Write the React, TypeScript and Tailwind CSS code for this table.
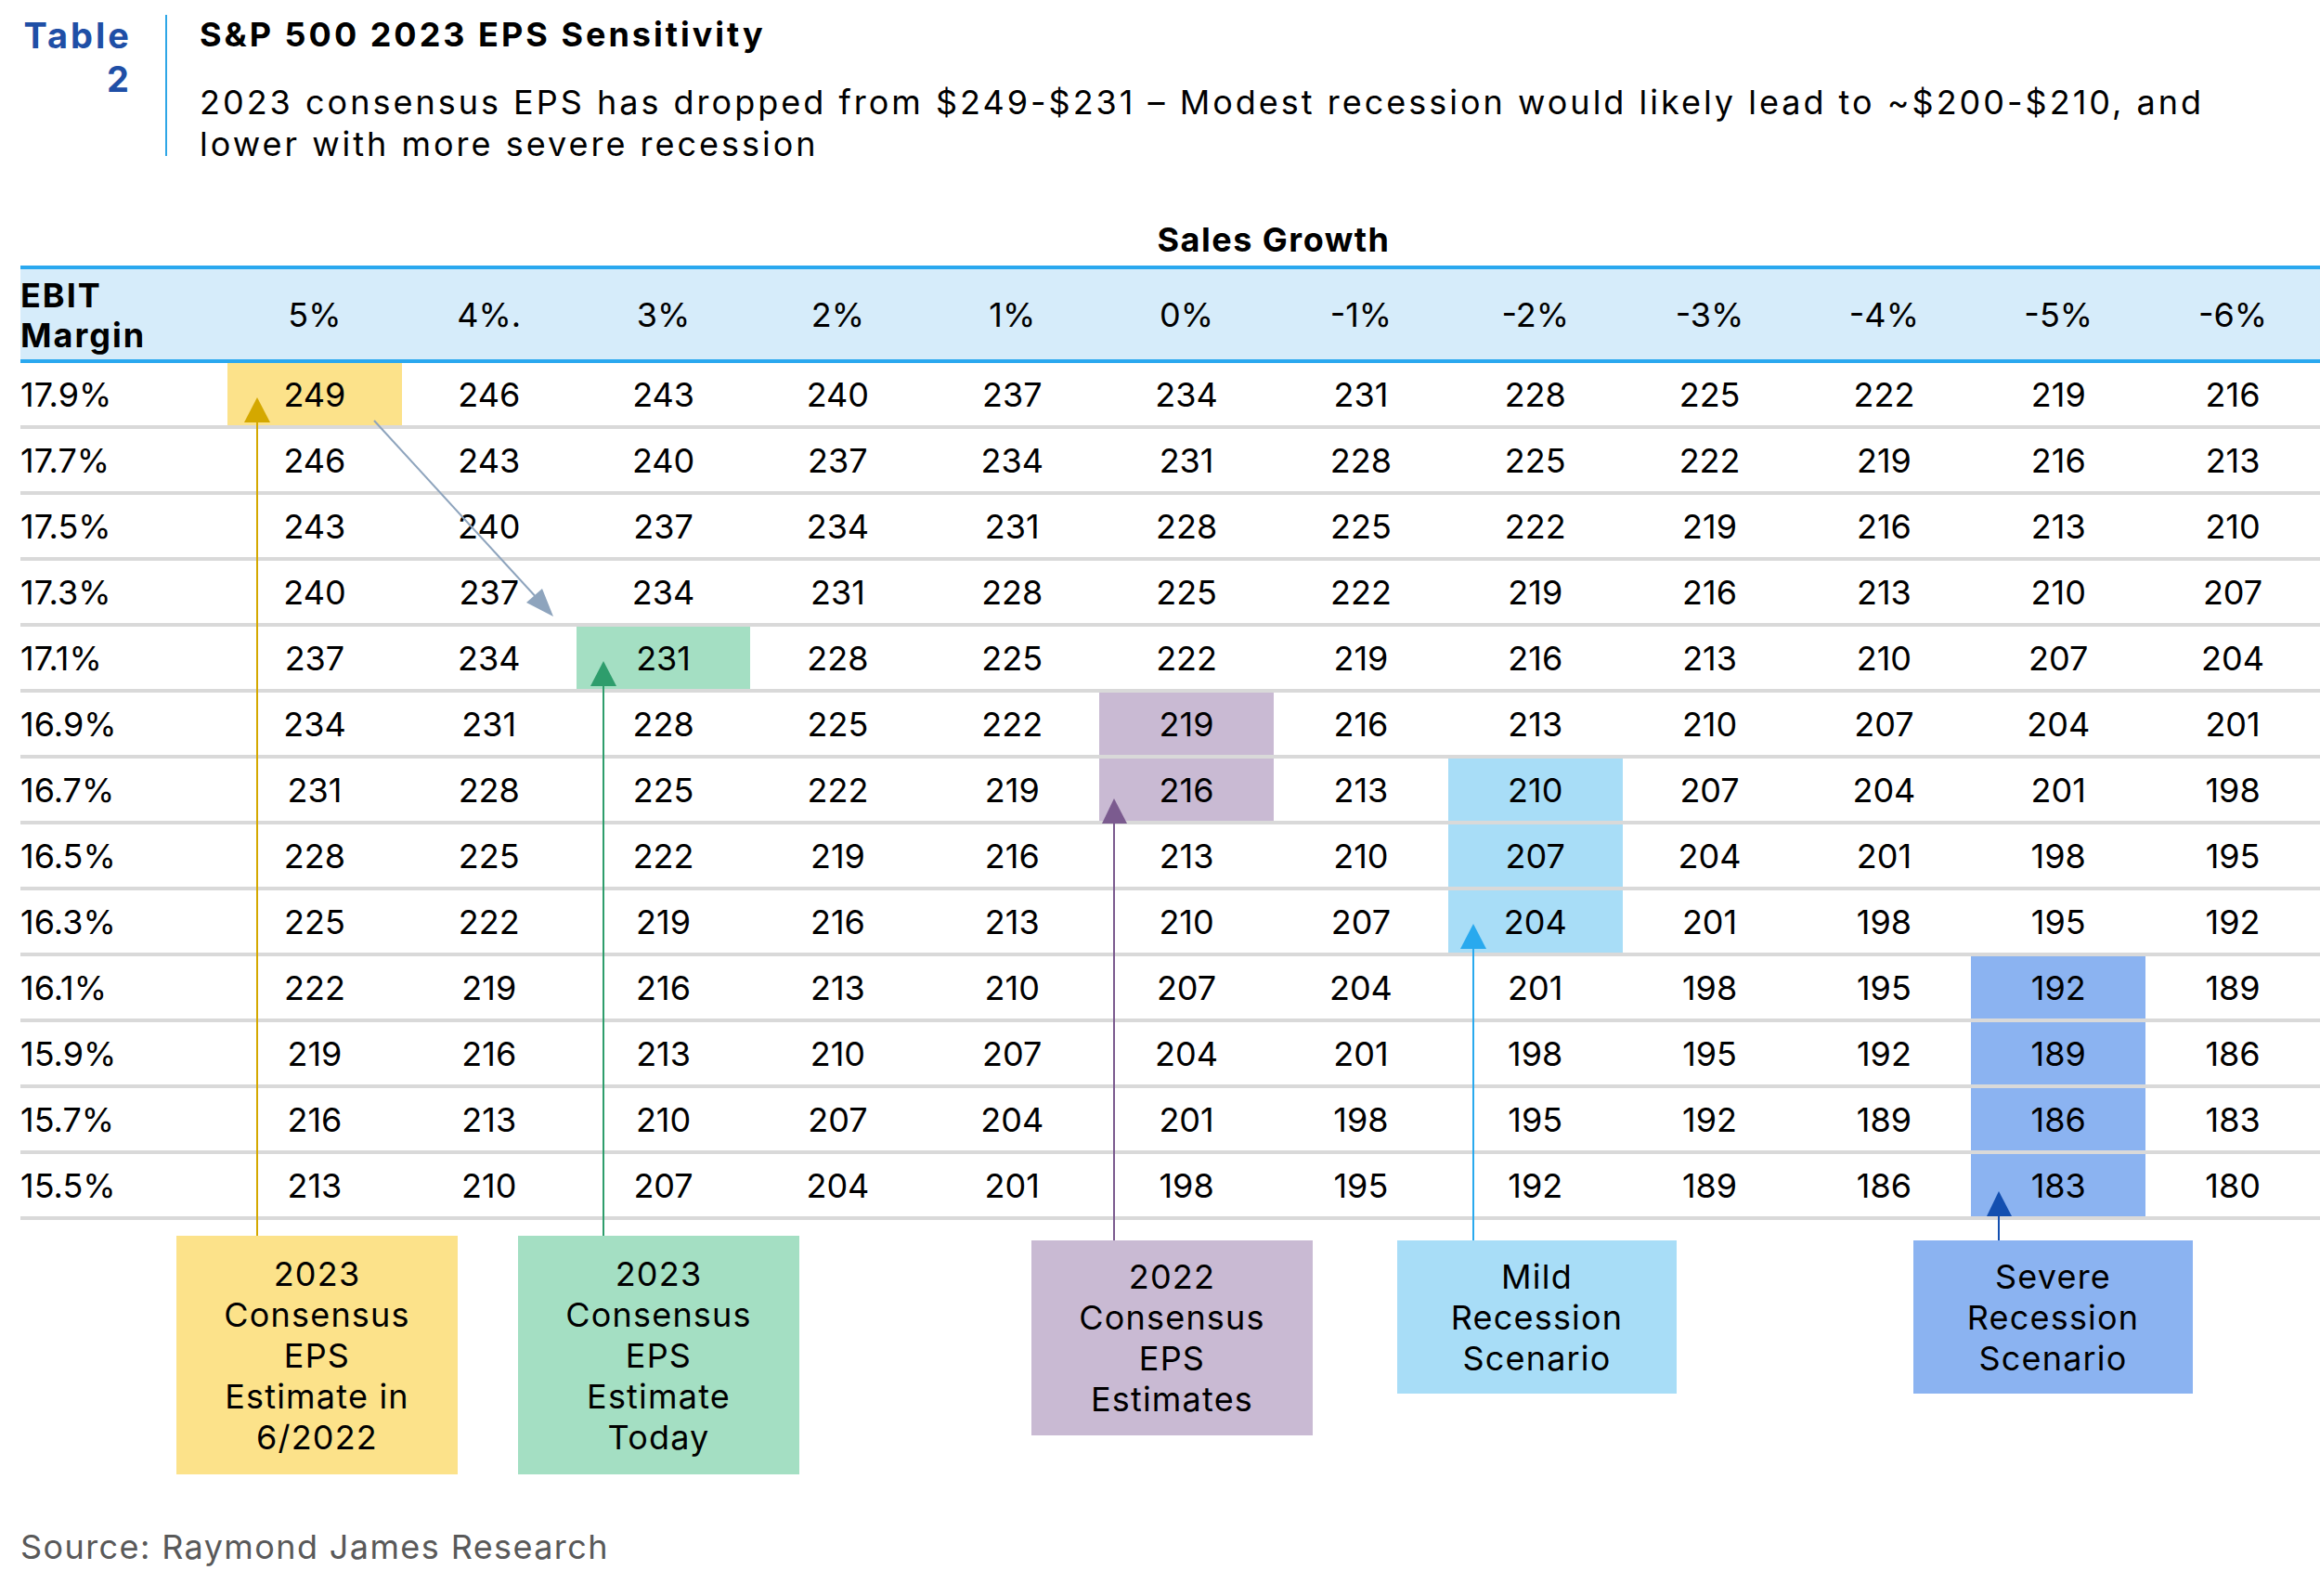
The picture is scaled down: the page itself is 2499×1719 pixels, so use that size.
const margins = ['17.9%', '17.7%', '17.5%', '17.3%', '17.1%', '16.9%', '16.7%', '16.5%', '16.3%', '16.1%', '15.9%', '15.7%', '15.5%'];
const growth = ['5%', '4%.', '3%', '2%', '1%', '0%', '-1%', '-2%', '-3%', '-4%', '-5%', '-6%'];

// highlighted cells: "row-col" -> background class
const highlight: Record<string, string> = {
  '0-0': 'bg-[#fce28a]',
  '4-2': 'bg-[#a4dfc3]',
  '5-5': 'bg-[#c9bad3]',
  '6-5': 'bg-[#c9bad3]',
  '6-7': 'bg-[#a8ddf7]',
  '7-7': 'bg-[#a8ddf7]',
  '8-7': 'bg-[#a8ddf7]',
  '9-10': 'bg-[#8bb3f1]',
  '10-10': 'bg-[#8bb3f1]',
  '11-10': 'bg-[#8bb3f1]',
  '12-10': 'bg-[#8bb3f1]',
};

function Note({ lines, className }: { lines: string[]; className: string }) {
  return (
    <div className={`flex flex-col items-center justify-center text-center text-[36px] leading-[44px] tracking-[1.2px] ${className}`}>
      {lines.map((l) => (
        <span key={l}>{l}</span>
      ))}
    </div>
  );
}

// arrows drawn over the table
function Arrows() {
  return (
    <svg className="absolute left-0 top-0 pointer-events-none" width="2499" height="1719">
      {/* yellow */}
      <line x1="277" y1="452" x2="277" y2="1331" stroke="#d4a800" strokeWidth="2" />
      <polygon points="263,455 291,455 277,428" fill="#d4a800" />
      {/* diagonal grey */}
      <line x1="403" y1="453" x2="580" y2="646" stroke="#8ea4bd" strokeWidth="2" />
      <polygon points="596,664 567,649 584,634" fill="#8ea4bd" />
      {/* green */}
      <line x1="650" y1="736" x2="650" y2="1331" stroke="#2e9d6c" strokeWidth="2" />
      <polygon points="636,739 664,739 650,712" fill="#2e9d6c" />
      {/* purple */}
      <line x1="1200" y1="884" x2="1200" y2="1336" stroke="#7b5b8f" strokeWidth="2" />
      <polygon points="1187,887 1214,887 1200,860" fill="#7b5b8f" />
      {/* light blue */}
      <line x1="1587" y1="1019" x2="1587" y2="1336" stroke="#29a9ee" strokeWidth="2" />
      <polygon points="1573,1022 1601,1022 1587,995" fill="#29a9ee" />
      {/* dark blue */}
      <line x1="2153" y1="1307" x2="2153" y2="1336" stroke="#134fb0" strokeWidth="2" />
      <polygon points="2140,1310 2167,1310 2153,1283" fill="#134fb0" />
    </svg>
  );
}

export default function App() {
  return (
    <div className="relative w-[2499px] h-[1719px] overflow-hidden bg-white text-black font-['Inter',sans-serif]">
      {/* Title block */}
      <div className="h-[236px] flex pt-[15px] pl-[22px]">
        <div className="w-[120px] text-right font-bold text-[#1f4fa6] text-[38px] leading-[47px] tracking-[3px]">
          Table
          <br />2
        </div>
        <div className="ml-[36px] mt-[1px] w-[2px] h-[152px] bg-[#2ea6e6]" />
        <div className="ml-[35px]">
          <div className="font-bold text-[36px] leading-[45px] tracking-[3px]">S&amp;P 500 2023 EPS Sensitivity</div>
          <div className="mt-[28px] text-[36px] leading-[45px] tracking-[3px]">
            2023 consensus EPS has dropped from $249-$231 – Modest recession would likely lead to ~$200-$210, and
            <br />
            lower with more severe recession
          </div>
        </div>
      </div>

      {/* Sales Growth */}
      <div className="h-[45px] pl-[245px] text-center font-bold text-[36px] leading-[45px] tracking-[1.5px]">Sales Growth</div>

      {/* Table */}
      <div className="mt-[5px] ml-[22px] w-[2477px] text-[36px]">
        <div className="grid grid-cols-[223px_repeat(12,minmax(0,1fr))] h-[105px] border-y-4 border-[#2aa8ef] bg-[#d6ecfa]">
          <div className="flex flex-col justify-center font-bold leading-[43px] pt-[2px] tracking-[2px]">
            <span>EBIT</span>
            <span>Margin</span>
          </div>
          {growth.map((g) => (
            <div key={g} className="flex items-center justify-center">
              {g}
            </div>
          ))}
        </div>
        {margins.map((m, r) => (
          <div key={m} className="grid grid-cols-[223px_repeat(12,minmax(0,1fr))] h-[71px] border-b-4 border-[#d9d9d9]">
            <div className="flex items-center">{m}</div>
            {growth.map((g, c) => (
              <div key={g} className={`flex items-center justify-center ${highlight[`${r}-${c}`] ?? ''}`}>
                {249 - 3 * r - 3 * c}
              </div>
            ))}
          </div>
        ))}
      </div>

      {/* Annotation boxes */}
      <div className="mt-[17px] pl-[190px] flex items-start">
        <Note className="w-[303px] h-[257px] bg-[#fce28a]" lines={['2023', 'Consensus', 'EPS', 'Estimate in', '6/2022']} />
        <Note className="ml-[65px] w-[303px] h-[257px] bg-[#a4dfc3]" lines={['2023', 'Consensus', 'EPS', 'Estimate', 'Today']} />
        <Note className="ml-[250px] mt-[5px] w-[303px] h-[210px] bg-[#c9bad3]" lines={['2022', 'Consensus', 'EPS', 'Estimates']} />
        <Note className="ml-[91px] mt-[5px] w-[301px] h-[165px] bg-[#a8ddf7]" lines={['Mild', 'Recession', 'Scenario']} />
        <Note className="ml-[255px] mt-[5px] w-[301px] h-[165px] bg-[#8bb3f1]" lines={['Severe', 'Recession', 'Scenario']} />
      </div>

      {/* Source */}
      <div className="mt-[56px] pl-[22px] text-[36px] leading-[45px] tracking-[1.4px] text-[#595959]">Source: Raymond James Research</div>

      <Arrows />
    </div>
  );
}
